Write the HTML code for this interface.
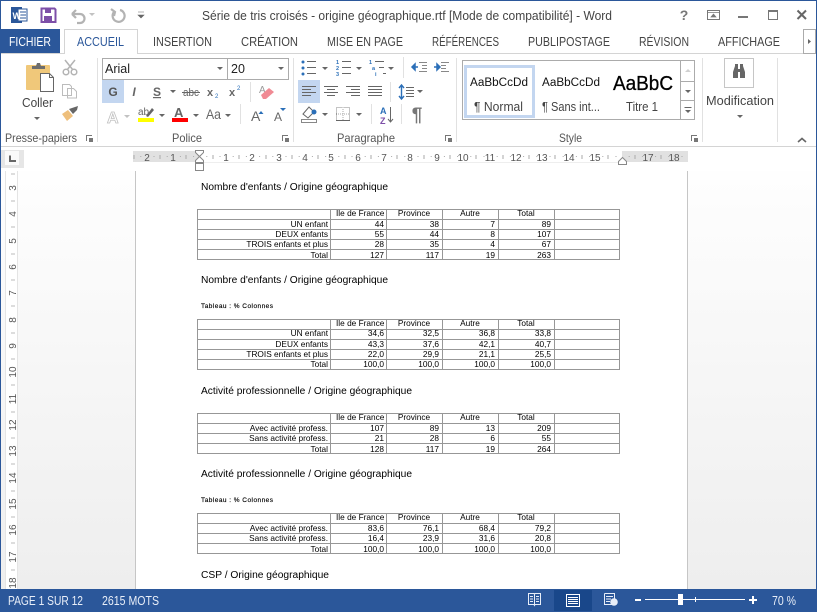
<!DOCTYPE html>
<html lang="fr"><head><meta charset="utf-8"><title>Word</title>
<style>
html,body{margin:0;padding:0;background:#fff;width:817px;height:612px;overflow:hidden}
svg{display:block;font-family:"Liberation Sans",Arial,sans-serif}
.tab{font-size:13px;fill:#444}
.lab{font-size:12px;fill:#555}
.rib{font-size:13px;fill:#444}
.h{font-size:10px;fill:#000}
.t{font-size:8.3px;fill:#000}
.e{text-anchor:end}
.m{text-anchor:middle}
.s{font-size:6.5px;fill:#000;stroke:#000;stroke-width:.15}
.r{font-size:10px;fill:#555;text-anchor:middle}
.g{fill:none;stroke:#979797;stroke-width:1;shape-rendering:crispEdges}
.ln{stroke:#666;stroke-width:1;shape-rendering:crispEdges;fill:none}
.sep{stroke:#e1e1e1;stroke-width:1;shape-rendering:crispEdges}
.st{font-size:13px;fill:#e8eef8}
</style></head><body>
<svg width="817" height="612" viewBox="0 0 817 612" xmlns="http://www.w3.org/2000/svg">
<defs>
<linearGradient id="bg" x1="0" y1="0" x2="0" y2="1"><stop offset="0" stop-color="#fefefe"/><stop offset="1" stop-color="#eeeeee"/></linearGradient>
<path id="ar" d="M-3 0h6l-3 3z" fill="#666"/>
<path id="lc" d="M0 0h6v1h-5v5h-1zM3 3h4v4h-4z" fill="#777"/>
</defs>
<rect width="817" height="612" fill="#fff"/>

<!-- title bar -->
<rect x="11" y="7" width="11" height="16" fill="#2b579a"/>
<rect x="18" y="9" width="9" height="12" fill="#fff" stroke="#2b579a"/>
<path d="M20 12h6M20 15h6M20 18h6" class="ln" style="stroke:#2b579a"/>
<text x="12.500" y="19" font-size="9" font-weight="700" fill="#fff">W</text>
<path d="M41.500 8.500h13l1 1v12.500h-14z" fill="none" stroke="#7d4fa8" stroke-width="2"/>
<rect x="45" y="9" width="6" height="4" fill="#7d4fa8"/><rect x="44" y="16" width="8" height="6" fill="#7d4fa8"/>
<path d="M72 14h8a4.500 4.500 0 0 1 0 9h-3M72 14l4-4M72 14l4 4" fill="none" stroke="#b3b3b3" stroke-width="2.200"/>
<use href="#ar" x="92" y="13" opacity=".4"/>
<path d="M120 10a6 6 0 1 1-6 2M111 9l4 3-1 4" fill="none" stroke="#b3b3b3" stroke-width="2.200"/>
<path d="M138 12h6M138 15h6l-3 3z" fill="#666" stroke="#666" stroke-width=".6"/>
<text x="202" y="20" font-size="12.500" fill="#444" textLength="410" lengthAdjust="spacingAndGlyphs">Série de tris croisés - origine géographique.rtf [Mode de compatibilité] - Word</text>
<text x="684" y="20" font-size="14" font-weight="700" fill="#777" text-anchor="middle">?</text>
<rect x="707.500" y="10.500" width="12" height="9" fill="none" stroke="#777"/><path d="M707 12.500h13M711 17l2.500-3 2.500 3z" stroke="#777" fill="#777" stroke-width=".7"/>
<rect x="738" y="16" width="10" height="2" fill="#777"/>
<rect x="768.500" y="10.500" width="9" height="9" fill="none" stroke="#777"/><rect x="768" y="10" width="10" height="2" fill="#777"/>
<path d="M797.500 10.500l8.500 8.500M806 10.500l-8.500 8.500" stroke="#666" stroke-width="2" fill="none"/>

<!-- tabs -->
<rect x="0" y="29" width="60" height="25" fill="#2b579a"/>
<text x="9" y="46" font-size="13" fill="#fff" textLength="42" lengthAdjust="spacingAndGlyphs">FICHIER</text>
<path d="M1 53.500H64.500V29.500H137.500V53.500H815" fill="none" stroke="#d4d4d4" shape-rendering="crispEdges"/>
<text x="77" y="46" class="tab" style="fill:#2b579a" textLength="47" lengthAdjust="spacingAndGlyphs">ACCUEIL</text>
<text x="153" y="46" class="tab" textLength="59" lengthAdjust="spacingAndGlyphs">INSERTION</text>
<text x="241" y="46" class="tab" textLength="57" lengthAdjust="spacingAndGlyphs">CRÉATION</text>
<text x="327" y="46" class="tab" textLength="76" lengthAdjust="spacingAndGlyphs">MISE EN PAGE</text>
<text x="432" y="46" class="tab" textLength="67" lengthAdjust="spacingAndGlyphs">RÉFÉRENCES</text>
<text x="528" y="46" class="tab" textLength="82" lengthAdjust="spacingAndGlyphs">PUBLIPOSTAGE</text>
<text x="639" y="46" class="tab" textLength="50" lengthAdjust="spacingAndGlyphs">RÉVISION</text>
<text x="718" y="46" class="tab" textLength="62" lengthAdjust="spacingAndGlyphs">AFFICHAGE</text>
<rect x="803.500" y="29.500" width="12" height="24" fill="#fff" stroke="#ababab"/>
<path d="M808 39l3 2.500-3 2.500z" fill="#666"/>

<!-- ribbon -->
<path class="sep" d="M97.500 58v84M293.500 58v84M456.500 58v84M702.500 58v84M777.500 58v84M250.500 82v20M240.500 104v20M403.500 57v21M390.500 82v20M371.500 104v20M401.500 104v20"/>
<path d="M0 146.500H817" stroke="#d4d4d4" shape-rendering="crispEdges"/>
<text x="5" y="142" class="lab" textLength="72" lengthAdjust="spacingAndGlyphs">Presse-papiers</text>
<text x="172" y="142" class="lab" textLength="30" lengthAdjust="spacingAndGlyphs">Police</text>
<text x="337" y="142" class="lab" textLength="58" lengthAdjust="spacingAndGlyphs">Paragraphe</text>
<text x="559" y="142" class="lab" textLength="23" lengthAdjust="spacingAndGlyphs">Style</text>
<use href="#lc" x="86" y="135"/><use href="#lc" x="282" y="135"/><use href="#lc" x="445" y="135"/><use href="#lc" x="691" y="135"/>
<path d="M798 142l4-3.500 4 3.500" fill="none" stroke="#666" stroke-width="1.600"/>

<!-- clipboard -->
<rect x="26" y="65" width="24" height="25" rx="1" fill="#f0c87a"/>
<path d="M32 69v-3h4l1-3h3l1 3h4v3z" fill="#6d6d6d"/>
<path d="M40.500 73.500h9l4 4v14h-13z" fill="#fff" stroke="#666"/><path d="M49.500 73.500v4h4" fill="none" stroke="#666"/>
<text x="22" y="107" class="rib" textLength="31" lengthAdjust="spacingAndGlyphs">Coller</text>
<use href="#ar" x="37" y="117"/>
<g fill="none" stroke="#b3b3b3" stroke-width="1.500"><path d="M65 60l8 10M75 60l-8 10"/><circle cx="66" cy="72" r="2.800"/><circle cx="74" cy="72" r="2.800"/></g>
<path d="M62.500 84.500h7l2 2v9h-9zM67.500 88.500h6l3 3v6.500h-9z" fill="#fff" stroke="#bcbcbc"/>
<path d="M62 114l6-4 5 6-6 5z" fill="#eebf7c"/><path d="M69 109l6-2 3-1-1 4-4 4z" fill="#666"/>

<!-- font -->
<rect x="102.500" y="58.500" width="186" height="21" fill="#fff" stroke="#ababab"/><path d="M227.500 58v22" stroke="#ababab"/>
<text x="105" y="73" font-size="12.500" fill="#222">Arial</text><text x="231" y="73" font-size="12.500" fill="#222">20</text>
<use href="#ar" x="220" y="67"/><use href="#ar" x="281" y="67"/>
<rect x="102" y="80" width="22" height="23" fill="#c3d6f0"/>
<text x="113" y="96" font-size="12" font-weight="700" fill="#555" class="m">G</text>
<text x="134" y="96" font-size="12" font-style="italic" font-weight="700" fill="#666" class="m">I</text>
<text x="157" y="96" font-size="12" font-weight="700" fill="#666" class="m" text-decoration="underline">S</text>
<use href="#ar" x="173" y="90"/>
<text x="183" y="96" font-size="11" fill="#666" textLength="16" lengthAdjust="spacingAndGlyphs">abc</text><path d="M182 92.500h18" stroke="#666"/>
<text x="207" y="96" font-size="11" font-weight="700" fill="#666">x</text><text x="215" y="98" font-size="6" fill="#2b6fb8">2</text>
<text x="229" y="96" font-size="11" font-weight="700" fill="#666">x</text><text x="237" y="90" font-size="6" fill="#2b6fb8">2</text>
<text x="259" y="93" font-size="10" fill="#999">A</text><path d="M261 95l8-7 5 4-8 7h-3z" fill="#f08a94"/>
<text x="107" y="123" font-size="16" font-weight="700" fill="#fff" stroke="#c0c0c0" stroke-width=".8">A</text><use href="#ar" x="127" y="115" opacity=".4"/>
<text x="138" y="115" font-size="10" fill="#666">ab</text><path d="M146 116l6-8 2 2-6 7z" fill="#666"/><rect x="138" y="118" width="16" height="4" fill="#ff0"/><use href="#ar" x="162" y="114"/>
<text x="174" y="117" font-size="13" font-weight="700" fill="#666">A</text><rect x="172" y="118" width="16" height="4" fill="#f00"/><use href="#ar" x="196" y="114"/>
<text x="206" y="119" font-size="14" fill="#666" textLength="15" lengthAdjust="spacingAndGlyphs">Aa</text><use href="#ar" x="228" y="114"/>
<text x="251" y="121" font-size="14" fill="#666">A</text><path d="M261 111l2.500 3h-5z" fill="#2b6fb8"/>
<text x="274" y="121" font-size="12" fill="#666">A</text><path d="M280 108h6l-3 3z" fill="#2b6fb8"/>

<!-- paragraph -->
<g fill="#2b6fb8"><circle cx="303" cy="62" r="1.500"/><circle cx="303" cy="68" r="1.500"/><circle cx="303" cy="74" r="1.500"/></g>
<path class="ln" d="M307 61.500h9M307 67.500h9M307 73.500h9M342 61.500h9M342 67.500h9M342 73.500h9M375 61.500h9M379 67.500h5M383 73.500h3"/>
<use href="#ar" x="325" y="67"/><use href="#ar" x="359" y="67"/><use href="#ar" x="391" y="67"/>
<g font-size="5.500" font-weight="700" fill="#2b6fb8"><text x="336" y="64">1</text><text x="336" y="70">2</text><text x="336" y="76">3</text><text x="369" y="64">1</text><text x="372" y="70">a</text><text x="375" y="76">i</text></g>
<path class="ln" d="M419 62.500h8M422 65.500h5M422 68.500h5M419 71.500h8M441 62.500h8M441 65.500h5M441 68.500h5M441 71.500h8" style="stroke:#888"/>
<path d="M412 67h6M412 67l3-3v6zM434 67h6M440 67l-3-3v6z" stroke="#2b6fb8" fill="#2b6fb8" stroke-width="1.500"/>
<rect x="298" y="80" width="22" height="23" fill="#c3d6f0"/>
<path class="ln" d="M302 86.500h14M302 89.500h9M302 92.500h14M302 95.500h9M324 86.500h14M327 89.500h8M324 92.500h14M327 95.500h8M346 86.500h14M351 89.500h9M346 92.500h14M351 95.500h9M368 86.500h14M368 89.500h14M368 92.500h14M368 95.500h14"/>
<path d="M401.500 85v14M399 88l2.500-3 2.500 3M399 96l2.500 3 2.500-3" stroke="#2b6fb8" fill="none" stroke-width="1.400"/>
<path class="ln" d="M406 87.500h8M406 90.500h8M406 93.500h8M406 96.500h8"/><use href="#ar" x="420" y="90"/>
<path d="M303 114l6-7 5 5-6 6z" fill="#fff" stroke="#666"/><circle cx="314" cy="112" r="2.500" fill="#2b6fb8"/><rect x="301.500" y="119.500" width="15" height="3" fill="#fff" stroke="#888"/><use href="#ar" x="325" y="113"/>
<path d="M336.500 107.500h13v13h-13z" fill="none" stroke="#888" stroke-dasharray="1 1"/><path d="M343 107v14M336 114h14" stroke="#aaa" stroke-dasharray="1 1"/><path d="M336 120.500h14" stroke="#666"/><use href="#ar" x="359" y="113"/>
<text x="380" y="114" font-size="9" font-weight="700" fill="#2b6fb8">A</text><text x="380" y="124" font-size="9" font-weight="700" fill="#7d4fa8">Z</text><path d="M390.500 107v15M388 119l2.500 3 2.500-3" stroke="#666" fill="none"/>
<text x="417" y="121" font-size="19" font-weight="700" fill="#777" class="m">¶</text>

<!-- styles -->
<rect x="462.500" y="60.500" width="232" height="59" fill="#fff" stroke="#ababab"/>
<rect x="465.500" y="66.500" width="68" height="50" fill="none" stroke="#c3d6f0" stroke-width="3"/>
<path d="M680.500 60v60M680 81.500h15M680 100.500h15" stroke="#ababab" shape-rendering="crispEdges"/>
<path d="M688 69l3 3h-6z" fill="#d0d0d0"/><use href="#ar" x="688" y="90"/><path d="M684.500 107.500h7" stroke="#666"/><use href="#ar" x="688" y="110"/>
<text x="470" y="86" font-size="11.500" fill="#111" textLength="58" lengthAdjust="spacingAndGlyphs">AaBbCcDd</text>
<text x="542" y="86" font-size="11.500" fill="#111" textLength="58" lengthAdjust="spacingAndGlyphs">AaBbCcDd</text>
<text x="613" y="90" font-size="20" fill="#000" stroke="#000" stroke-width=".3" textLength="60" lengthAdjust="spacingAndGlyphs">AaBbC</text>
<text x="474" y="111" class="rib" textLength="49" lengthAdjust="spacingAndGlyphs">¶ Normal</text>
<text x="542" y="111" class="rib" textLength="58" lengthAdjust="spacingAndGlyphs">¶ Sans int...</text>
<text x="626" y="111" class="rib" textLength="32" lengthAdjust="spacingAndGlyphs">Titre 1</text>

<!-- modification -->
<rect x="724.500" y="58.500" width="29" height="29" fill="#fff" stroke="#c6c6c6"/>
<path d="M733 78v-6l2-6v-2h3v14zM745 78v-6l-2-6v-2h-3v14z" fill="#666"/><rect x="738" y="69" width="2" height="3" fill="#666"/>
<text x="706" y="105" class="rib" textLength="68" lengthAdjust="spacingAndGlyphs">Modification</text>
<use href="#ar" x="740" y="115"/>

<!-- document background -->
<rect x="1" y="171" width="815" height="418" fill="url(#bg)"/>
<rect x="1" y="147" width="815" height="24" fill="#fff"/>
<rect x="1" y="150" width="23" height="18" fill="#e6e6e6"/>
<rect x="5" y="151" width="14" height="14" fill="#fafafa"/>
<path d="M10 155.500v5.500h6" fill="none" stroke="#666" stroke-width="2"/>

<!-- horizontal ruler -->
<rect x="133" y="151" width="66" height="11" fill="#e1e1e1"/><rect x="199" y="151" width="423" height="11" fill="#fff"/><rect x="622" y="151" width="66" height="11" fill="#e1e1e1"/>
<path d="M199 162.500H622" stroke="#eee"/>
<path d="M140.300 156.500H688" stroke="#aaa" stroke-dasharray="1 12.200"/>
<path d="M134 155v4M160 155v4M186 155v4M213 155v4M239 155v4M266 155v4M292 155v4M318 155v4M345 155v4M371 155v4M397 155v4M424 155v4M450 155v4M476 155v4M503 155v4M529 155v4M555 155v4M582 155v4M608 155v4M635 155v4M661 155v4" stroke="#aaa" shape-rendering="crispEdges"/>
<text class="r" x="147" y="161">2</text><text class="r" x="173" y="161">1</text><text class="r" x="226" y="161">1</text><text class="r" x="252" y="161">2</text><text class="r" x="279" y="161">3</text><text class="r" x="305" y="161">4</text><text class="r" x="331" y="161">5</text><text class="r" x="358" y="161">6</text><text class="r" x="384" y="161">7</text><text class="r" x="410" y="161">8</text><text class="r" x="437" y="161">9</text><text class="r" x="463" y="161">10</text><text class="r" x="490" y="161">11</text><text class="r" x="516" y="161">12</text><text class="r" x="542" y="161">13</text><text class="r" x="569" y="161">14</text><text class="r" x="595" y="161">15</text><text class="r" x="648" y="161">17</text><text class="r" x="674" y="161">18</text>
<path d="M195.500 150.500h8v2l-4 4-4-4zM199.500 156.500l4 4v2h-8v-2z" fill="#fff" stroke="#888"/><rect x="195.500" y="163.500" width="8" height="7" fill="#fff" stroke="#888"/>
<path d="M618.500 164.500v-3l4-4 4 4v3z" fill="#fff" stroke="#888"/>

<!-- vertical ruler -->
<rect x="6" y="171" width="11" height="418" fill="#fff"/>
<path d="M5.500 171V589M17.500 171V589" stroke="#e4e4e4" shape-rendering="crispEdges"/>
<text class="r" transform="translate(16 188) rotate(-90)">3</text><text class="r" transform="translate(16 214) rotate(-90)">4</text><text class="r" transform="translate(16 241) rotate(-90)">5</text><text class="r" transform="translate(16 267) rotate(-90)">6</text><text class="r" transform="translate(16 293) rotate(-90)">7</text><text class="r" transform="translate(16 320) rotate(-90)">8</text><text class="r" transform="translate(16 346) rotate(-90)">9</text><text class="r" transform="translate(16 372) rotate(-90)">10</text><text class="r" transform="translate(16 399) rotate(-90)">11</text><text class="r" transform="translate(16 425) rotate(-90)">12</text><text class="r" transform="translate(16 451) rotate(-90)">13</text><text class="r" transform="translate(16 478) rotate(-90)">14</text><text class="r" transform="translate(16 504) rotate(-90)">15</text><text class="r" transform="translate(16 530) rotate(-90)">16</text><text class="r" transform="translate(16 557) rotate(-90)">17</text><text class="r" transform="translate(16 583) rotate(-90)">18</text>
<path d="M11 174h4M11 201h4M11 227h4M11 254h4M11 280h4M11 306h4M11 333h4M11 359h4M11 385h4M11 412h4M11 438h4M11 464h4M11 491h4M11 517h4M11 543h4M11 570h4" stroke="#bbb" shape-rendering="crispEdges"/>

<!-- page -->
<rect x="135" y="171" width="553" height="418" fill="#fff"/>
<path d="M135.500 171V589M687.500 171V589" stroke="#c6c6c6" shape-rendering="crispEdges"/>

<text x="201" y="190" class="h" textLength="187" lengthAdjust="spacingAndGlyphs">Nombre d'enfants / Origine géographique</text>
<text x="201" y="283" class="h" textLength="187" lengthAdjust="spacingAndGlyphs">Nombre d'enfants / Origine géographique</text>
<text x="201" y="308" class="s" textLength="72" lengthAdjust="spacing">Tableau : % Colonnes</text>
<text x="201" y="394" class="h" textLength="211" lengthAdjust="spacingAndGlyphs">Activité professionnelle / Origine géographique</text>
<text x="201" y="477" class="h" textLength="211" lengthAdjust="spacingAndGlyphs">Activité professionnelle / Origine géographique</text>
<text x="201" y="502" class="s" textLength="72" lengthAdjust="spacing">Tableau : % Colonnes</text>
<text x="201" y="578" class="h" textLength="128" lengthAdjust="spacingAndGlyphs">CSP / Origine géographique</text>

<!-- table grids -->
<path class="g" d="M197.500 209.500H619.500V259.500H197.500ZM197.500 219.500H619.500M197.500 229.500H619.500M197.500 239.500H619.500M197.500 249.500H619.500M330.500 209V260M386.500 209V260M442.500 209V260M498.500 209V260M554.500 209V260"/>
<path class="g" d="M197.500 319.500H619.500V369.500H197.500ZM197.500 329.500H619.500M197.500 339.500H619.500M197.500 349.500H619.500M197.500 359.500H619.500M330.500 319V370M386.500 319V370M442.500 319V370M498.500 319V370M554.500 319V370"/>
<path class="g" d="M197.500 413.500H619.500V453.500H197.500ZM197.500 423.500H619.500M197.500 433.500H619.500M197.500 443.500H619.500M330.500 413V454M386.500 413V454M442.500 413V454M498.500 413V454M554.500 413V454"/>
<path class="g" d="M197.500 513.500H619.500V553.500H197.500ZM197.500 523.500H619.500M197.500 533.500H619.500M197.500 543.500H619.500M330.500 513V554M386.500 513V554M442.500 513V554M498.500 513V554M554.500 513V554"/>

<!-- table 1 -->
<text class="t" x="336" y="216">Ile de France</text><text class="t m" x="414" y="216">Province</text><text class="t m" x="470" y="216">Autre</text><text class="t m" x="526" y="216">Total</text>
<text class="t e" x="328" y="227">UN enfant</text><text class="t e" x="384" y="227">44</text><text class="t e" x="439" y="227">38</text><text class="t e" x="495" y="227">7</text><text class="t e" x="551" y="227">89</text>
<text class="t e" x="328" y="237">DEUX enfants</text><text class="t e" x="384" y="237">55</text><text class="t e" x="439" y="237">44</text><text class="t e" x="495" y="237">8</text><text class="t e" x="551" y="237">107</text>
<text class="t e" x="328" y="247">TROIS enfants et plus</text><text class="t e" x="384" y="247">28</text><text class="t e" x="439" y="247">35</text><text class="t e" x="495" y="247">4</text><text class="t e" x="551" y="247">67</text>
<text class="t e" x="328" y="258">Total</text><text class="t e" x="384" y="258">127</text><text class="t e" x="439" y="258">117</text><text class="t e" x="495" y="258">19</text><text class="t e" x="551" y="258">263</text>
<!-- table 2 -->
<text class="t" x="336" y="326">Ile de France</text><text class="t m" x="414" y="326">Province</text><text class="t m" x="470" y="326">Autre</text><text class="t m" x="526" y="326">Total</text>
<text class="t e" x="328" y="336">UN enfant</text><text class="t e" x="384" y="336">34,6</text><text class="t e" x="439" y="336">32,5</text><text class="t e" x="495" y="336">36,8</text><text class="t e" x="551" y="336">33,8</text>
<text class="t e" x="328" y="347">DEUX enfants</text><text class="t e" x="384" y="347">43,3</text><text class="t e" x="439" y="347">37,6</text><text class="t e" x="495" y="347">42,1</text><text class="t e" x="551" y="347">40,7</text>
<text class="t e" x="328" y="357">TROIS enfants et plus</text><text class="t e" x="384" y="357">22,0</text><text class="t e" x="439" y="357">29,9</text><text class="t e" x="495" y="357">21,1</text><text class="t e" x="551" y="357">25,5</text>
<text class="t e" x="328" y="367">Total</text><text class="t e" x="384" y="367">100,0</text><text class="t e" x="439" y="367">100,0</text><text class="t e" x="495" y="367">100,0</text><text class="t e" x="551" y="367">100,0</text>
<!-- table 3 -->
<text class="t" x="336" y="420">Ile de France</text><text class="t m" x="414" y="420">Province</text><text class="t m" x="470" y="420">Autre</text><text class="t m" x="526" y="420">Total</text>
<text class="t e" x="328" y="431">Avec activité profess.</text><text class="t e" x="384" y="431">107</text><text class="t e" x="439" y="431">89</text><text class="t e" x="495" y="431">13</text><text class="t e" x="551" y="431">209</text>
<text class="t e" x="328" y="441">Sans activité profess.</text><text class="t e" x="384" y="441">21</text><text class="t e" x="439" y="441">28</text><text class="t e" x="495" y="441">6</text><text class="t e" x="551" y="441">55</text>
<text class="t e" x="328" y="452">Total</text><text class="t e" x="384" y="452">128</text><text class="t e" x="439" y="452">117</text><text class="t e" x="495" y="452">19</text><text class="t e" x="551" y="452">264</text>
<!-- table 4 -->
<text class="t" x="336" y="520">Ile de France</text><text class="t m" x="414" y="520">Province</text><text class="t m" x="470" y="520">Autre</text><text class="t m" x="526" y="520">Total</text>
<text class="t e" x="328" y="531">Avec activité profess.</text><text class="t e" x="384" y="531">83,6</text><text class="t e" x="439" y="531">76,1</text><text class="t e" x="495" y="531">68,4</text><text class="t e" x="551" y="531">79,2</text>
<text class="t e" x="328" y="541">Sans activité profess.</text><text class="t e" x="384" y="541">16,4</text><text class="t e" x="439" y="541">23,9</text><text class="t e" x="495" y="541">31,6</text><text class="t e" x="551" y="541">20,8</text>
<text class="t e" x="328" y="552">Total</text><text class="t e" x="384" y="552">100,0</text><text class="t e" x="439" y="552">100,0</text><text class="t e" x="495" y="552">100,0</text><text class="t e" x="551" y="552">100,0</text>

<!-- status bar -->
<rect x="0" y="589" width="817" height="23" fill="#2b579a"/>
<text x="8" y="605" class="st" textLength="75" lengthAdjust="spacingAndGlyphs">PAGE 1 SUR 12</text>
<text x="102" y="605" class="st" textLength="57" lengthAdjust="spacingAndGlyphs">2615 MOTS</text>
<rect x="554" y="590" width="38" height="21" fill="#19478a"/>
<path d="M528.500 593.500h5.500l.5 1 .5-1h5.500v11h-5.500l-.5 1-.5-1h-5.500zM534.500 594v11M530 596.500h3M530 599h3M530 601.500h3M536 596.500h3M536 599h3M536 601.500h3" fill="none" stroke="#e8eef8"/>
<rect x="566.500" y="594.500" width="13" height="12" fill="none" stroke="#fff"/><path d="M568 597.500h10M568 599.500h10M568 601.500h10M568 603.500h10" stroke="#fff"/>
<path d="M604.500 593.500h10v5M604.500 593.500v11h7M606 596.500h7M606 599h5M606 601.500h4" fill="none" stroke="#e8eef8"/><circle cx="614" cy="602" r="3.800" fill="#e8eef8"/>
<rect x="635" y="599" width="6" height="2" fill="#fff"/>
<rect x="645" y="599" width="100" height="1" fill="#fff"/>
<rect x="678" y="594" width="5" height="11" fill="#fff"/>
<rect x="695" y="597" width="1" height="5" fill="#fff"/>
<path d="M749 600h8M753 596v8" stroke="#fff" stroke-width="2"/>
<text x="772" y="605" class="st" textLength="24" lengthAdjust="spacingAndGlyphs">70 %</text>

<!-- window border -->
<path d="M.5 0V612M816.500 0V612M0 .5H817" stroke="#2b579a" shape-rendering="crispEdges"/>
</svg>
</body></html>
